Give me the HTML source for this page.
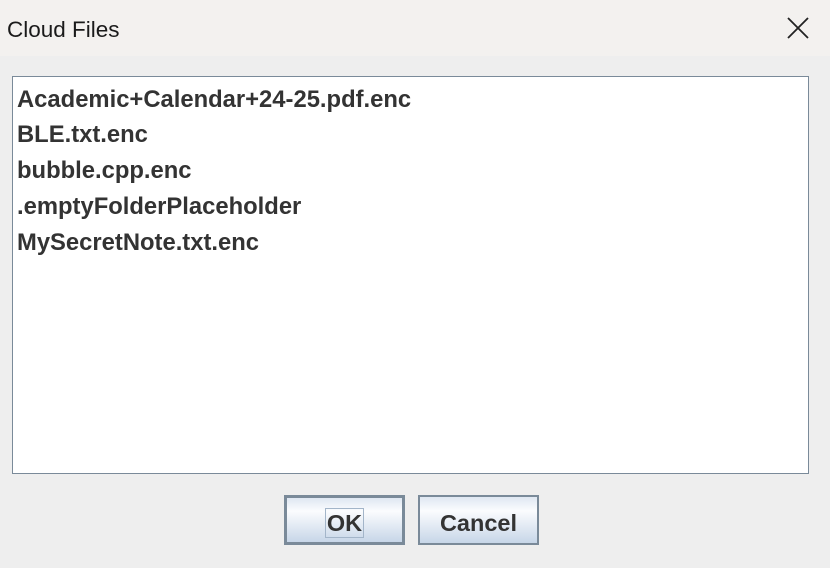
<!DOCTYPE html>
<html><head><style>
body{margin:0;width:830px;height:568px;background:#eeeeee;position:relative;overflow:hidden;font-family:"Liberation Sans",sans-serif}
.title{position:absolute;left:0;top:0;width:830px;height:56px;background:#f3f1ef}
.title span{position:absolute;left:7px;top:17px;font-size:22.5px;color:#1a1a1a}
.list{position:absolute;left:12px;top:76px;width:795px;height:396px;background:#fff;border:1px solid #7a8a99}
.item{position:absolute;left:4px;font-size:23.8px;font-weight:bold;color:#333}
.btn{position:absolute;top:495px;height:50px;box-sizing:border-box;background:linear-gradient(#dfe7f2,#fbfcfe 30%,#c7d6e8);border:2px solid #7a8a99;font-weight:bold;font-size:23.5px;color:#333;text-align:center;line-height:52px}
</style></head><body>
<div class="title"><span>Cloud Files</span>
<svg style="position:absolute;left:787px;top:17px" width="22" height="22"><path d="M1 1L21 21M21 1L1 21" stroke="#222" stroke-width="1.8"/></svg></div>
<div class="list">
<div class="item" style="top:9px">Academic+Calendar+24-25.pdf.enc</div>
<div class="item" style="top:44px">BLE.txt.enc</div>
<div class="item" style="top:80px">bubble.cpp.enc</div>
<div class="item" style="top:116px">.emptyFolderPlaceholder</div>
<div class="item" style="top:152px">MySecretNote.txt.enc</div>
</div>
<div class="btn" style="left:284px;width:121px;border-width:3px;line-height:50px"><span style="border:1px solid #a3b5c9;padding:1px 1px">OK</span></div>
<div class="btn" style="left:418px;width:121px">Cancel</div>
</body></html>
